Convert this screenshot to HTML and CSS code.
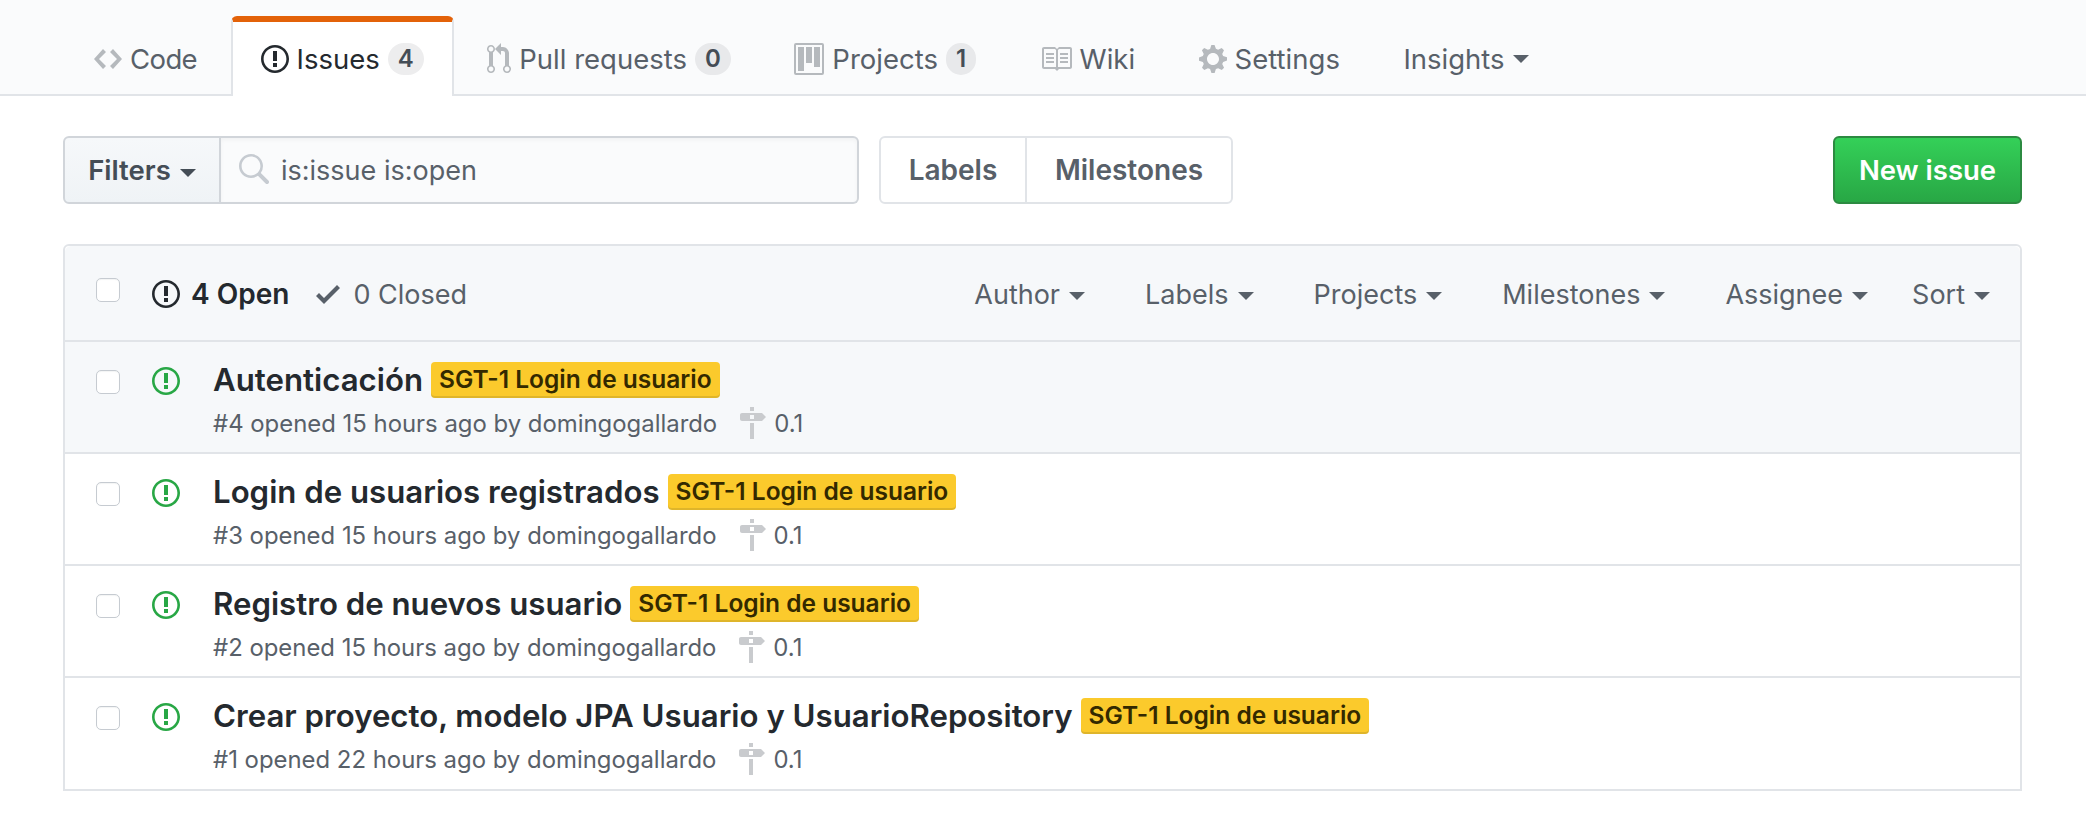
FILE: index.html
```html
<!DOCTYPE html>
<html lang="en">
<head>
    <meta charset="UTF-8">
    <meta name="viewport" content="width=device-width, initial-scale=1.0">
    <title>Issues</title>
    <link rel="stylesheet" href="styles.css">
</head>
<body>
    <svg class="sprite" xmlns="http://www.w3.org/2000/svg">
        <symbol id="i-code" viewBox="0 0 14 16"><path d="M9.5 3L8 4.5 11.5 8 8 11.5 9.5 13 14 8 9.5 3zm-5 0L0 8l4.5 5L6 11.5 2.5 8 6 4.5 4.5 3z"/></symbol>
        <symbol id="i-issue" viewBox="0 0 14 16"><path d="M7 2.3c3.14 0 5.7 2.56 5.7 5.7s-2.56 5.7-5.7 5.7A5.71 5.71 0 0 1 1.3 8c0-3.14 2.56-5.7 5.7-5.7zM7 1C3.14 1 0 4.14 0 8s3.14 7 7 7 7-3.14 7-7-3.14-7-7-7zm1 3H6v5h2V4zm0 6H6v2h2v-2z"/></symbol>
        <symbol id="i-pr" viewBox="0 0 12 16"><path d="M11 11.28V5c-.03-.78-.34-1.47-.94-2.06C9.46 2.35 8.78 2.03 8 2H7V0L4 3l3 3V4h1c.27.02.48.11.69.31.21.2.3.42.31.69v6.28A1.993 1.993 0 0 0 10 15a1.993 1.993 0 0 0 1-3.72zm-1 2.92c-.66 0-1.2-.55-1.2-1.2 0-.65.55-1.2 1.2-1.2.65 0 1.2.55 1.2 1.2 0 .65-.55 1.2-1.2 1.2zM4 3c0-1.11-.89-2-2-2a1.993 1.993 0 0 0-1 3.72v6.56A1.993 1.993 0 0 0 2 15a1.993 1.993 0 0 0 1-3.72V4.72c.59-.34 1-.98 1-1.72zm-.8 10c0 .66-.55 1.2-1.2 1.2-.65 0-1.2-.55-1.2-1.2 0-.65.55-1.2 1.2-1.2.65 0 1.2.55 1.2 1.2zM2 4.2C1.34 4.2.8 3.65.8 3c0-.65.55-1.2 1.2-1.2.65 0 1.2.55 1.2 1.2 0 .65-.55 1.2-1.2 1.2z"/></symbol>
        <symbol id="i-project" viewBox="0 0 15 16"><path fill-rule="evenodd" d="M10 12h3V2h-3v10zm-4-2h3V2H6v8zm-4 4h3V2H2v12zm-1 1h13V1H1v14zM14 0H1a1 1 0 0 0-1 1v14a1 1 0 0 0 1 1h13a1 1 0 0 0 1-1V1a1 1 0 0 0-1-1z"/></symbol>
        <symbol id="i-book" viewBox="0 0 16 16"><path d="M3 5h4v1H3V5zm0 3h4V7H3v1zm0 2h4V9H3v1zm11-5h-4v1h4V5zm0 2h-4v1h4V7zm0 2h-4v1h4V9zm2-6v9c0 .55-.45 1-1 1H9.5l-1 1-1-1H2c-.55 0-1-.45-1-1V3c0-.55.45-1 1-1h5.5l1 1 1-1H15c.55 0 1 .45 1 1zm-8 .5L7.5 3H2v9h6V3.5zm7-.5H9.5l-.5.5V12h6V3z"/></symbol>
        <symbol id="i-gear" viewBox="0 0 14 16"><path d="M14 8.77v-1.6l-1.94-.64-.45-1.09.88-1.84-1.13-1.13-1.81.91-1.09-.45-.69-1.92h-1.6l-.63 1.94-1.11.45-1.84-.88-1.13 1.13.91 1.81-.45 1.09L0 7.23v1.59l1.94.64.45 1.09-.88 1.84 1.13 1.13 1.81-.91 1.09.45.69 1.92h1.59l.63-1.94 1.11-.45 1.84.88 1.13-1.13-.92-1.81.47-1.09L14 8.75v.02zM7 11c-1.66 0-3-1.34-3-3s1.34-3 3-3 3 1.34 3 3-1.34 3-3 3z"/></symbol>
        <symbol id="i-search" viewBox="0 0 16 16"><path d="M15.7 13.3l-3.81-3.83A5.93 5.93 0 0 0 13 6c0-3.31-2.69-6-6-6S1 2.69 1 6s2.69 6 6 6c1.3 0 2.48-.41 3.47-1.11l3.83 3.81c.19.2.45.3.7.3.25 0 .52-.09.7-.3a.996.996 0 0 0 0-1.41v.01zM7 10.7c-2.59 0-4.7-2.11-4.7-4.7 0-2.59 2.11-4.7 4.7-4.7 2.59 0 4.7 2.11 4.7 4.7 0 2.59-2.11 4.7-4.7 4.7z"/></symbol>
        <symbol id="i-check" viewBox="0 0 12 16"><path d="M12 5l-8 8-4-4 1.5-1.5L4 10l6.5-6.5L12 5z"/></symbol>
        <symbol id="i-milestone" viewBox="0 0 14 16"><path fill-rule="evenodd" d="M8 2H6V0h2v2zm4 5H2c-.55 0-1-.45-1-1V4c0-.55.45-1 1-1h10l2 2-2 2zM8 4H6v2h2V4zM6 16h2V8H6v8z"/></symbol>
    </svg>

    <nav class="reponav">
        <a class="tab tab-code"><svg class="icon w28"><use href="#i-code"/></svg>Code</a>
        <a class="tab selected"><svg class="icon w28"><use href="#i-issue"/></svg>Issues<span class="counter">4</span></a>
        <a class="tab"><svg class="icon w24"><use href="#i-pr"/></svg>Pull requests<span class="counter">0</span></a>
        <a class="tab"><svg class="icon w30"><use href="#i-project"/></svg>Projects<span class="counter">1</span></a>
        <a class="tab"><svg class="icon w32"><use href="#i-book"/></svg>Wiki</a>
        <a class="tab"><svg class="icon w28"><use href="#i-gear"/></svg>Settings</a>
        <a class="tab">Insights<span class="caret"></span></a>
    </nav>

    <div class="container">
        <div class="subnav">
            <div class="search-group">
                <button class="filters">Filters<span class="caret"></span></button>
                <div class="search">
                    <svg class="search-icon"><use href="#i-search"/></svg>
                    <span>is:issue is:open</span>
                </div>
            </div>
            <div class="links">
                <a class="link-labels">Labels</a>
                <a class="link-milestones">Milestones</a>
            </div>
            <button class="btn-new">New issue</button>
        </div>

        <div class="issues">
            <div class="issues-header">
                <input type="checkbox" class="check">
                <div class="states">
                    <a class="state open"><svg class="icon w28"><use href="#i-issue"/></svg>4 Open</a>
                    <a class="state"><svg class="icon w24"><use href="#i-check"/></svg>0 Closed</a>
                </div>
                <div class="sorts">
                    <a>Author<span class="caret"></span></a>
                    <a>Labels<span class="caret"></span></a>
                    <a>Projects<span class="caret"></span></a>
                    <a>Milestones<span class="caret"></span></a>
                    <a>Assignee<span class="caret"></span></a>
                    <a class="sort">Sort<span class="caret"></span></a>
                </div>
            </div>

            <div class="issue unread">
                <input type="checkbox" class="check">
                <svg class="icon w28 status"><use href="#i-issue"/></svg>
                <div class="issue-body">
                    <div class="issue-title"><a>Autenticación</a><span class="label">SGT-1 Login de usuario</span></div>
                    <div class="issue-meta">
                        <span>#4 opened 15 hours ago by domingogallardo</span>
                        <span class="milestone"><svg class="icon w28"><use href="#i-milestone"/></svg>0.1</span>
                    </div>
                </div>
            </div>
            <div class="issue">
                <input type="checkbox" class="check">
                <svg class="icon w28 status"><use href="#i-issue"/></svg>
                <div class="issue-body">
                    <div class="issue-title"><a>Login de usuarios registrados</a><span class="label">SGT-1 Login de usuario</span></div>
                    <div class="issue-meta">
                        <span>#3 opened 15 hours ago by domingogallardo</span>
                        <span class="milestone"><svg class="icon w28"><use href="#i-milestone"/></svg>0.1</span>
                    </div>
                </div>
            </div>
            <div class="issue">
                <input type="checkbox" class="check">
                <svg class="icon w28 status"><use href="#i-issue"/></svg>
                <div class="issue-body">
                    <div class="issue-title"><a>Registro de nuevos usuario</a><span class="label">SGT-1 Login de usuario</span></div>
                    <div class="issue-meta">
                        <span>#2 opened 15 hours ago by domingogallardo</span>
                        <span class="milestone"><svg class="icon w28"><use href="#i-milestone"/></svg>0.1</span>
                    </div>
                </div>
            </div>
            <div class="issue">
                <input type="checkbox" class="check">
                <svg class="icon w28 status"><use href="#i-issue"/></svg>
                <div class="issue-body">
                    <div class="issue-title"><a>Crear proyecto, modelo JPA Usuario y UsuarioRepository</a><span class="label">SGT-1 Login de usuario</span></div>
                    <div class="issue-meta">
                        <span>#1 opened 22 hours ago by domingogallardo</span>
                        <span class="milestone"><svg class="icon w28"><use href="#i-milestone"/></svg>0.1</span>
                    </div>
                </div>
            </div>
        </div>
    </div>
</body>
</html>
```

FILE: styles.css
```css
body { font-family: Inter, "Liberation Sans", sans-serif; font-size: 27.5px; color: #24292e; background: #fff; margin: 0; overflow: hidden; }
button { font-family: inherit; }
.sprite { display: none; }
.icon { height: 32px; fill: currentColor; flex: none; }
.w24 { width: 24px; }
.w28 { width: 28px; }
.w30 { width: 30px; }
.w32 { width: 32px; }
.caret { display: inline-block; width: 0; height: 0; border: 8px solid transparent; border-top-color: currentColor; border-bottom-width: 0; margin-left: 9px; vertical-align: middle; }

.reponav { display: flex; gap: 3.5px; height: 78px; padding: 16px 0 0 64px; background: #fafbfc; border-bottom: 2px solid #e1e4e8; }
.tab { display: flex; align-items: center; gap: 8px; box-sizing: border-box; height: 78px; padding: 8px 30px 0; color: #586069; }
.tab .icon { color: #b5b9bd; }
.tab .caret { margin-left: 0; }
.tab-code { letter-spacing: -.6px; }
.tab.selected { height: 80px; padding: 0 28px; background: #fff; color: #24292e; border: 2px solid #e1e4e8; border-top: 6px solid #e36209; border-bottom: 0; border-radius: 6px 6px 0 0; position: relative; }
.tab.selected .icon { color: #24292e; }
.counter { display: inline-block; padding: 0 10px; line-height: 32px; font-size: 24px; font-weight: 600; text-align: center; color: #444d56; background: rgba(27,31,35,.08); border-radius: 40px; }

.container { padding: 40px 64px 0 63px; }
.subnav { display: flex; height: 68px; }
.search-group { display: flex; width: 796px; }
.filters { width: 158px; padding: 0; font-size: 27.5px; font-weight: 600; color: #444d56; background: linear-gradient(#f6f8fa, #eff3f6); border: 2px solid #d1d5da; border-radius: 6px 0 0 6px; }
.search { flex: 1; display: flex; align-items: center; gap: 12px; padding-left: 16px; font-size: 27px; color: #586069; background: #fafbfc; border: 2px solid #d1d5da; border-left: 0; border-radius: 0 6px 6px 0; box-shadow: inset 0 2px 4px rgba(27,31,35,.04); }
.search-icon { width: 32px; height: 32px; fill: #c6cbd1; }
.links { display: flex; margin-left: 20px; font-size: 28px; font-weight: 600; color: #586069; border: 2px solid #e1e4e8; border-radius: 6px; }
.links a { display: flex; align-items: center; justify-content: center; }
.link-labels { width: 144px; border-right: 2px solid #e1e4e8; }
.link-milestones { width: 204px; }
.btn-new { margin-left: auto; width: 189px; font-size: 27.5px; font-weight: 600; color: #fff; background: linear-gradient(#34d058, #28a745); border: 2px solid #2c8a41; border-radius: 6px; padding: 0; }

.issues { margin-top: 40px; border: 2px solid #e1e4e8; border-radius: 6px 6px 0 0; }
.issues-header { display: flex; align-items: center; box-sizing: border-box; height: 96px; padding: 2px 30px 0 31px; font-size: 27px; background: #f6f8fa; border-bottom: 2px solid #e1e4e8; color: #586069; border-radius: 6px 6px 0 0; }
.check { appearance: none; width: 24px; height: 24px; margin: 0; flex: none; background: #fff; border: 1px solid #c6cbd1; border-radius: 5px; box-shadow: inset 0 1px 1px rgba(27,31,35,.05); }
.issues-header .check { margin: -8px 32px 0 0; }
.states { display: flex; gap: 27px; }
.state { display: flex; align-items: center; gap: 13px; }
.state.open { gap: 11px; font-size: 28px; font-weight: 600; color: #24292e; }
.sorts { display: flex; margin-left: auto; gap: 60px; }
.sorts a { white-space: nowrap; }
.sorts .sort { margin-left: -16px; }

.issue { display: flex; align-items: flex-start; height: 110px; padding-left: 31px; border-bottom: 2px solid #e1e4e8; }
.issue:last-child { height: 111px; border-bottom: 0; }
.issue.unread { background: #f6f8fa; }
.issue .check { margin: 28px 32px 0 0; }
.status { color: #28a745; margin: 23px 33px 0 0; }
.issue-title { display: flex; align-items: center; height: 44px; margin-top: 16px; font-size: 31.2px; font-weight: 600; color: #24292e; }
.label { margin-left: 8px; padding: 0 8px; height: 36px; line-height: 34px; font-size: 24.5px; font-weight: 600; color: #332900; background: #fbca2c; border-radius: 4px; box-shadow: inset 0 -2px 0 rgba(27,31,35,.12); box-sizing: border-box; }
.issue-meta { display: flex; align-items: center; height: 32px; margin-top: 5px; font-size: 23.9px; color: #586069; }
.milestone { display: flex; align-items: center; gap: 8px; margin-left: 21px; }
.milestone .icon { color: #c9cbce; }
```
